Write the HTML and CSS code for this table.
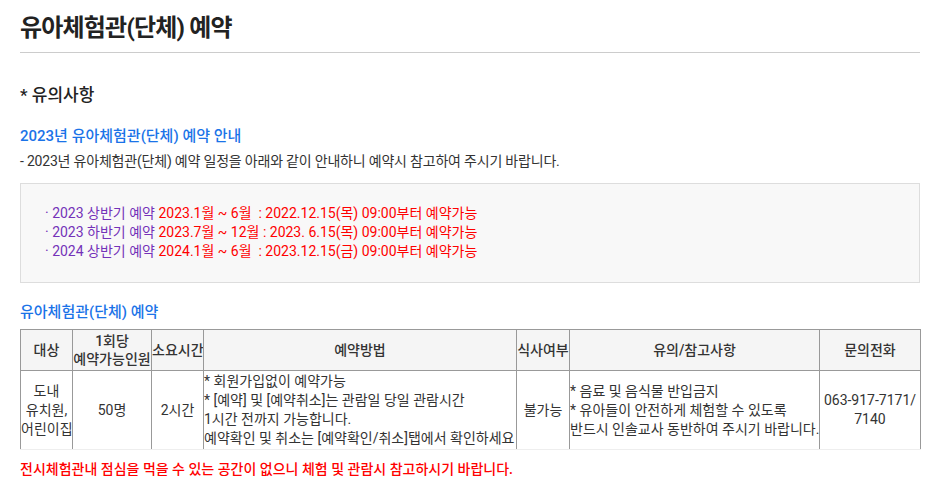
FILE: index.html
```html
<!DOCTYPE html>
<html lang="ko">
<head>
<meta charset="utf-8">
<link rel="stylesheet" href="styles.css">
</head>
<body>
<div class="page">
  <h1 class="title">유아체험관(단체) 예약</h1>
  <h2 class="section">* 유의사항</h2>
  <h3 class="subhead">2023년 유아체험관(단체) 예약 안내</h3>
  <p class="desc">- 2023년 유아체험관(단체) 예약 일정을 아래와 같이 안내하니 예약시 참고하여 주시기 바랍니다.</p>
  <div class="notice">
    <p><span class="purple">· 2023 상반기 예약</span> <span class="red">2023.1월 ~ 6월 &nbsp;: 2022.12.15(목) 09:00부터 예약가능</span></p>
    <p><span class="purple">· 2023 하반기 예약</span> <span class="red">2023.7월 ~ 12월 : 2023. 6.15(목) 09:00부터 예약가능</span></p>
    <p><span class="purple">· 2024 상반기 예약</span> <span class="red">2024.1월 ~ 6월 &nbsp;: 2023.12.15(금) 09:00부터 예약가능</span></p>
  </div>
  <h3 class="subhead subhead-table">유아체험관(단체) 예약</h3>
  <table class="rtable">
    <colgroup>
      <col class="c1"><col class="c2"><col class="c3"><col class="c4"><col class="c5"><col class="c6"><col class="c7">
    </colgroup>
    <thead>
      <tr>
        <th>대상</th>
        <th>1회당<br>예약가능인원</th>
        <th>소요시간</th>
        <th>예약방법</th>
        <th>식사여부</th>
        <th>유의/참고사항</th>
        <th>문의전화</th>
      </tr>
    </thead>
    <tbody>
      <tr>
        <td>도내<br>유치원,<br>어린이집</td>
        <td>50명</td>
        <td>2시간</td>
        <td class="left">* 회원가입없이 예약가능<br>* [예약] 및 [예약취소]는 관람일 당일 관람시간<br>1시간 전까지 가능합니다.<br>예약확인 및 취소는 [예약확인/취소]탭에서 확인하세요</td>
        <td>불가능</td>
        <td class="left">* 음료 및 음식물 반입금지<br>* 유아들이 안전하게 체험할 수 있도록<br>반드시 인솔교사 동반하여 주시기 바랍니다.</td>
        <td>063-917-7171/<br>7140</td>
      </tr>
    </tbody>
  </table>
  <p class="warn">전시체험관내 점심을 먹을 수 있는 공간이 없으니 체험 및 관람시 참고하시기 바랍니다.</p>
</div>
</body>
</html>
```

FILE: styles.css
```css
* { box-sizing: border-box; }
html, body { margin: 0; padding: 0; background: #fff; }
body {
  font-family: Roboto, "Noto Sans CJK KR", sans-serif;
  color: #333;
  font-size: 14px;
}
.page {
  width: 900px;
  margin-left: 20px;
  padding-top: 12px;
}
.title {
  margin: 0;
  font-size: 24px;
  font-weight: 700;
  color: #222;
  line-height: 32px;
  padding-bottom: 8px;
  border-bottom: 1px solid #ccc;
  letter-spacing: -0.8px;
}
.section {
  margin: 31px 0 0;
  font-size: 17px;
  font-weight: 500;
  color: #222;
  line-height: 22px;
}
.subhead {
  margin: 20px 0 0;
  font-size: 15px;
  font-weight: 500;
  color: #1a73e8;
  line-height: 20px;
}
.desc {
  margin: 5px 0 0;
  line-height: 20px;
  letter-spacing: -0.2px;
}
.notice {
  margin-top: 12px;
  background: #f8f8f8;
  border: 1px solid #ddd;
  padding: 20px 24px 0;
  height: 100px;
}
.notice p {
  margin: 0;
  line-height: 19px;
}
.purple { color: #7432b8; }
.red { color: #ff0000; }
.subhead-table { margin-top: 19px; }
.rtable {
  margin-top: 7px;
  width: 900px;
  border-collapse: collapse;
  table-layout: fixed;
  font-size: 14px;
}
.c1 { width: 52px; }
.c2 { width: 79px; }
.c3 { width: 52px; }
.c4 { width: 313px; }
.c5 { width: 53px; }
.c6 { width: 250px; }
.c7 { width: 101px; }
.rtable th, .rtable td {
  border: 1px solid #999;
  padding: 0;
  text-align: center;
  vertical-align: middle;
  white-space: nowrap;
  overflow: hidden;
}
.rtable th {
  background: #f5f5f5;
  font-weight: 500;
  color: #333;
  height: 41px;
  line-height: 18px;
}
.rtable td {
  height: 79px;
  color: #333;
  line-height: 19px;
}
.rtable tbody tr td { border-bottom-color: #eee; }
.rtable td.left { text-align: left; }
.warn {
  margin: 10px 0 0;
  color: #ff0000;
  font-weight: 500;
  line-height: 18px;
}
```
